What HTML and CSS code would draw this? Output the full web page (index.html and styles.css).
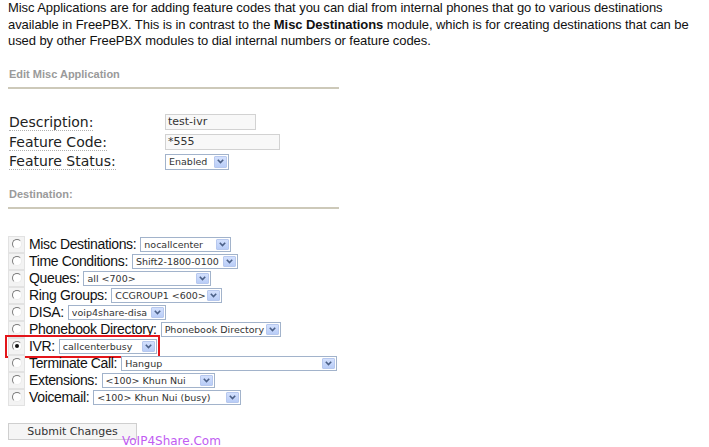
FILE: index.html
```html
<!DOCTYPE html>
<html>
<head>
<meta charset="utf-8">
<link rel="stylesheet" href="styles.css">
</head>
<body>
<p class="intro">Misc Applications are for adding feature codes that you can dial from internal phones that go to various destinations available in FreePBX. This is in contrast to the <b>Misc Destinations</b> module, which is for creating destinations that can be used by other FreePBX modules to dial internal numbers or feature codes.</p>

<h5 class="section first">Edit Misc Application</h5>
<div class="rule"></div>

<div class="form">
  <span class="lbl"><span class="tip">Description:</span></span>
  <span class="field"><span class="input w-desc">test-ivr</span></span>
  <span class="lbl"><span class="tip">Feature Code:</span></span>
  <span class="field"><span class="input w-code">*555</span></span>
  <span class="lbl"><span class="tip">Feature Status:</span></span>
  <span class="field"><span class="select w-status"><span class="val">Enabled</span><span class="btn"><svg width="7" height="5" viewBox="0 0 7 5"><path d="M0.8 0.8 L3.5 3.6 L6.2 0.8" fill="none" stroke="#4b6087" stroke-width="1.6"/></svg></span></span></span>
</div>

<h5 class="section second">Destination:</h5>
<div class="rule"></div>

<div class="dests">
  <div class="row"><span class="radio"><i></i></span><span class="dlbl">Misc Destinations:</span><span class="select w-misc"><span class="val">nocallcenter</span><span class="btn"><svg width="7" height="5" viewBox="0 0 7 5"><path d="M0.8 0.8 L3.5 3.6 L6.2 0.8" fill="none" stroke="#4b6087" stroke-width="1.6"/></svg></span></span></div>
  <div class="row"><span class="radio"><i></i></span><span class="dlbl">Time Conditions:</span><span class="select w-time"><span class="val">Shift2-1800-0100</span><span class="btn"><svg width="7" height="5" viewBox="0 0 7 5"><path d="M0.8 0.8 L3.5 3.6 L6.2 0.8" fill="none" stroke="#4b6087" stroke-width="1.6"/></svg></span></span></div>
  <div class="row"><span class="radio"><i></i></span><span class="dlbl">Queues:</span><span class="select w-queue"><span class="val">all &lt;700&gt;</span><span class="btn"><svg width="7" height="5" viewBox="0 0 7 5"><path d="M0.8 0.8 L3.5 3.6 L6.2 0.8" fill="none" stroke="#4b6087" stroke-width="1.6"/></svg></span></span></div>
  <div class="row"><span class="radio"><i></i></span><span class="dlbl">Ring Groups:</span><span class="select w-ring"><span class="val">CCGROUP1 &lt;600&gt;</span><span class="btn"><svg width="7" height="5" viewBox="0 0 7 5"><path d="M0.8 0.8 L3.5 3.6 L6.2 0.8" fill="none" stroke="#4b6087" stroke-width="1.6"/></svg></span></span></div>
  <div class="row"><span class="radio"><i></i></span><span class="dlbl">DISA:</span><span class="select w-disa"><span class="val">voip4share-disa</span><span class="btn"><svg width="7" height="5" viewBox="0 0 7 5"><path d="M0.8 0.8 L3.5 3.6 L6.2 0.8" fill="none" stroke="#4b6087" stroke-width="1.6"/></svg></span></span></div>
  <div class="row"><span class="radio"><i></i></span><span class="dlbl">Phonebook Directory:</span><span class="select w-phone"><span class="val">Phonebook Directory</span><span class="btn"><svg width="7" height="5" viewBox="0 0 7 5"><path d="M0.8 0.8 L3.5 3.6 L6.2 0.8" fill="none" stroke="#4b6087" stroke-width="1.6"/></svg></span></span></div>
  <div class="row"><span class="hl"><span class="radio"><i class="on"></i></span><span class="dlbl">IVR:</span><span class="select w-ivr"><span class="val">callcenterbusy</span><span class="btn"><svg width="7" height="5" viewBox="0 0 7 5"><path d="M0.8 0.8 L3.5 3.6 L6.2 0.8" fill="none" stroke="#4b6087" stroke-width="1.6"/></svg></span></span></span></div>
  <div class="row"><span class="radio"><i></i></span><span class="dlbl">Terminate Call:</span><span class="select w-term"><span class="val">Hangup</span><span class="btn"><svg width="7" height="5" viewBox="0 0 7 5"><path d="M0.8 0.8 L3.5 3.6 L6.2 0.8" fill="none" stroke="#4b6087" stroke-width="1.6"/></svg></span></span></div>
  <div class="row"><span class="radio"><i></i></span><span class="dlbl">Extensions:</span><span class="select w-ext"><span class="val">&lt;100&gt; Khun Nui</span><span class="btn"><svg width="7" height="5" viewBox="0 0 7 5"><path d="M0.8 0.8 L3.5 3.6 L6.2 0.8" fill="none" stroke="#4b6087" stroke-width="1.6"/></svg></span></span></div>
  <div class="row"><span class="radio"><i></i></span><span class="dlbl">Voicemail:</span><span class="select w-vm"><span class="val">&lt;100&gt; Khun Nui (busy)</span><span class="btn"><svg width="7" height="5" viewBox="0 0 7 5"><path d="M0.8 0.8 L3.5 3.6 L6.2 0.8" fill="none" stroke="#4b6087" stroke-width="1.6"/></svg></span></span></div>
</div>

<div class="submit-wrap">
  <button class="submit">Submit Changes</button>
  <span class="watermark">VoIP4Share.Com</span>
</div>
</body>
</html>
```
FILE: styles.css
```css
html, body {
  margin: 0;
  padding: 0;
  background: #fff;
}
body {
  padding: 0 8px;
  font-family: "Liberation Sans", Arial, sans-serif;
  color: #000;
  width: 693px;
  height: 447px;
  overflow: hidden;
}
.intro {
  margin: 0;
  width: 700px;
  font-size: 13px;
  letter-spacing: -0.07px;
  line-height: 16.5px;
  color: #111;
}
.intro b {
  font-weight: bold;
}
.section {
  margin: 0;
  font-size: 11px;
  line-height: 13px;
  font-weight: bold;
  color: #9a9a9a;
  padding-left: 1px;
}
.section.first {
  margin-top: 18px;
}
.section.second {
  margin-top: 16px;
}
.rule {
  width: 331px;
  height: 2px;
  background: #cdc9b9;
  margin-top: 6px;
}
.form {
  display: grid;
  grid-template-columns: 157px auto;
  grid-auto-rows: 19.7px;
  margin-top: 24px;
  align-items: center;
}
.lbl {
  font-family: "DejaVu Sans", Verdana, sans-serif;
  font-size: 14px;
  color: #222;
  padding-left: 1px;
  line-height: 17px;
}
.tip {
  border-bottom: 1px dotted #b0b0b0;
}
.field {
  display: flex;
  align-items: center;
}
.input {
  box-sizing: border-box;
  height: 16px;
  border: 1px solid #d2d2d2;
  background: #f8f8f8;
  font-family: "DejaVu Sans", Verdana, sans-serif;
  font-size: 11px;
  line-height: 14px;
  color: #333;
  padding-left: 2px;
}
.w-desc { width: 91px; }
.w-code { width: 115px; }

.select {
  box-sizing: border-box;
  height: 15px;
  border: 1px solid #a2b3cb;
  background: #fff;
  display: inline-flex;
  align-items: center;
  padding: 0 1px 0 3px;
  flex: none;
}
.select .val {
  flex: 1;
  font-family: "DejaVu Sans", Verdana, sans-serif;
  font-size: 9.5px;
  line-height: 13px;
  color: #333;
  white-space: nowrap;
  overflow: hidden;
}
.select .btn {
  width: 13px;
  height: 11px;
  box-sizing: border-box;
  background: linear-gradient(#d3e0fd, #b9cdf7);
  border: 1px solid #b7c8ee;
  border-radius: 1px;
  display: flex;
  align-items: center;
  justify-content: center;
}
.form .select {
  height: 16px;
}
.form .select .btn {
  height: 12px;
}
.w-status { width: 64px; }
.w-misc { width: 91px; }
.w-time { width: 106px; }
.w-queue { width: 128px; }
.w-ring { width: 111px; }
.w-disa { width: 98px; }
.w-phone { width: 120px; }
.w-ivr { width: 98px; }
.w-term { width: 216px; }
.w-ext { width: 113px; }
.w-vm { width: 148px; }

.dests {
  margin-top: 27px;
}
.row {
  height: 17px;
  display: flex;
  align-items: center;
}
.hl {
  display: inline-flex;
  align-items: center;
  height: 17px;
  outline: 2px solid #e3151a;
  outline-offset: 1px;
}
.radio {
  box-sizing: border-box;
  width: 17px;
  height: 17px;
  background: #f3f3f3;
  border: 1px solid #e2e2e2;
  display: flex;
  align-items: flex-start;
  justify-content: center;
  padding-top: 2px;
  flex: none;
}
.radio i {
  box-sizing: border-box;
  width: 10px;
  height: 10px;
  border-radius: 50%;
  background: #fff;
  border: 1px solid;
  border-color: #7a7a7a #ececec #ececec #7a7a7a;
  display: flex;
  align-items: center;
  justify-content: center;
}
.radio i.on::after {
  content: "";
  width: 4px;
  height: 4px;
  border-radius: 50%;
  background: #111;
}
.dlbl {
  font-family: "Liberation Sans", Arial, sans-serif;
  font-size: 14px;
  letter-spacing: -0.35px;
  color: #111;
  padding-left: 4px;
  padding-right: 4px;
  line-height: 17px;
  white-space: nowrap;
}

.submit-wrap {
  position: relative;
  margin-top: 17px;
  height: 23px;
}
.submit {
  box-sizing: border-box;
  width: 129px;
  height: 17px;
  margin: 0;
  padding: 0;
  border: 1px solid #cfcfcf;
  background: #f5f5f5;
  font-family: "DejaVu Sans", Verdana, sans-serif;
  font-size: 11px;
  line-height: 15px;
  color: #333;
  display: block;
}
.watermark {
  position: absolute;
  left: 114px;
  top: 11px;
  font-family: "DejaVu Sans", Verdana, sans-serif;
  font-size: 12px;
  line-height: 14px;
  color: #c15cf2;
  white-space: nowrap;
}
```
